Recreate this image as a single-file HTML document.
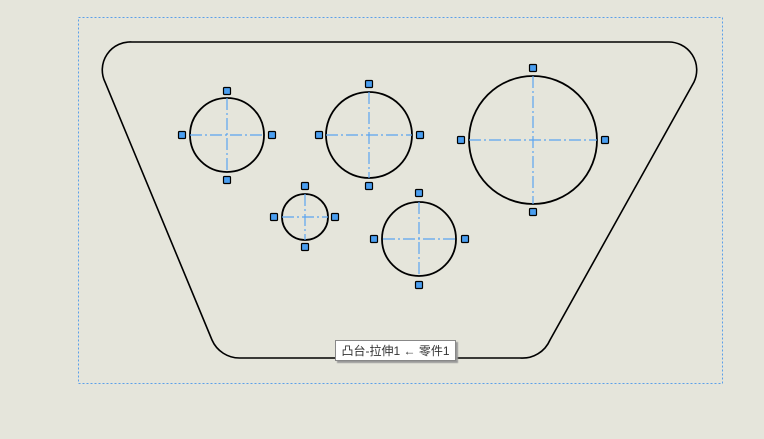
<html><head><style>body{margin:0;background:#e5e5db;width:764px;height:439px;overflow:hidden;position:relative;font-family:"Liberation Sans","Noto Sans CJK SC",sans-serif}
.l{position:absolute;left:335px;top:340px;width:121px;height:21px;background:#fff;border:1px solid #888;box-shadow:2px 2px 1px #999;font-size:12px;line-height:20px;color:#333;text-align:center;box-sizing:border-box}</style></head><body>
<svg width="764" height="439" style="position:absolute;left:0;top:0">
<rect x="78.5" y="17.5" width="644" height="366" fill="none" stroke="#5aa0ea" stroke-dasharray="2,2"/>
<path d="M132,42 L668,42 A28,28 0 0 1 694,82 L550,340 A30,30 0 0 1 520,358 L240,358 A30,30 0 0 1 212,340 L105,82 A28,28 0 0 1 132,42 Z" fill="none" stroke="#000" stroke-width="1.6"/>
<g fill="none" stroke="#000" stroke-width="1.8">
<circle cx="227" cy="135" r="37"/><circle cx="369" cy="135" r="43"/><circle cx="533" cy="140" r="64"/><circle cx="305" cy="217" r="23"/><circle cx="419" cy="239" r="37"/></g>
<g stroke="#5aa4f0" stroke-width="1.2" stroke-dasharray="12,3,2,3">
<path d="M190,135H264M227,98V172"/><path d="M326,135H412M369,92V178"/><path d="M469,140H597M533,76V204"/><path d="M282,217H328M305,194V240"/><path d="M383,239H455M419,202V276"/></g>
<g fill="#4a9ef0" stroke="#000" stroke-width="1.2">
<rect x="178.5" y="131.5" width="7" height="7" rx="1"/><rect x="268.5" y="131.5" width="7" height="7" rx="1"/><rect x="223.5" y="87.5" width="7" height="7" rx="1"/><rect x="223.5" y="176.5" width="7" height="7" rx="1"/>
<rect x="315.5" y="131.5" width="7" height="7" rx="1"/><rect x="416.5" y="131.5" width="7" height="7" rx="1"/><rect x="365.5" y="80.5" width="7" height="7" rx="1"/><rect x="365.5" y="182.5" width="7" height="7" rx="1"/>
<rect x="457.5" y="136.5" width="7" height="7" rx="1"/><rect x="601.5" y="136.5" width="7" height="7" rx="1"/><rect x="529.5" y="64.5" width="7" height="7" rx="1"/><rect x="529.5" y="208.5" width="7" height="7" rx="1"/>
<rect x="270.5" y="213.5" width="7" height="7" rx="1"/><rect x="331.5" y="213.5" width="7" height="7" rx="1"/><rect x="301.5" y="182.5" width="7" height="7" rx="1"/><rect x="301.5" y="243.5" width="7" height="7" rx="1"/>
<rect x="370.5" y="235.5" width="7" height="7" rx="1"/><rect x="461.5" y="235.5" width="7" height="7" rx="1"/><rect x="415.5" y="189.5" width="7" height="7" rx="1"/><rect x="415.5" y="281.5" width="7" height="7" rx="1"/></g>
</svg>
<div class="l">凸台-拉伸1 ← 零件1</div>
</body></html>
